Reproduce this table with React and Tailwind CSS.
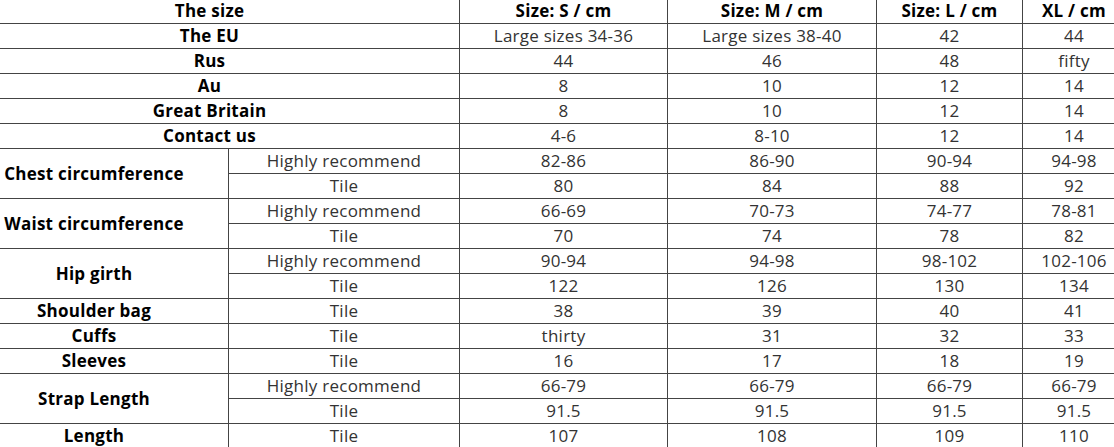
import React from "react";

const B = "border border-[#444]";
const H = `${B} text-center font-bold text-black p-0`;
const L = `${B} text-center font-bold text-black p-0 pr-[40px]`;
const C = `${B} text-center text-[#333] p-0`;

function Vals({ v }) {
  return v.map((x, i) => (
    <td key={i} className={C}>
      {x}
    </td>
  ));
}

export default function App() {
  const rowCls = "h-[25px]";
  return (
    <div
      className="w-[1114px] h-[447px] overflow-hidden bg-white"
      style={{ fontFamily: '"Open Sans", "Noto Sans", sans-serif' }}
    >
      <table className="border-collapse table-fixed w-[1126px] -mt-[2px] -ml-px text-[17px] leading-[22px] tracking-[0.25px]">
        <colgroup>
          <col className="w-[229px]" />
          <col className="w-[231px]" />
          <col className="w-[208px]" />
          <col className="w-[209px]" />
          <col className="w-[146px]" />
          <col className="w-[103px]" />
        </colgroup>
        <tbody>
          <tr className={rowCls}>
            <td colSpan={2} className={L}>The size</td>
            <td className={H}>Size: S / cm</td>
            <td className={H}>Size: M / cm</td>
            <td className={H}>Size: L / cm</td>
            <td className={H}>XL / cm</td>
          </tr>
          <tr className={rowCls}>
            <td colSpan={2} className={L}>The EU</td>
            <Vals v={["Large sizes 34-36", "Large sizes 38-40", "42", "44"]} />
          </tr>
          <tr className={rowCls}>
            <td colSpan={2} className={L}>Rus</td>
            <Vals v={["44", "46", "48", "fifty"]} />
          </tr>
          <tr className={rowCls}>
            <td colSpan={2} className={L}>Au</td>
            <Vals v={["8", "10", "12", "14"]} />
          </tr>
          <tr className={rowCls}>
            <td colSpan={2} className={L}>Great Britain</td>
            <Vals v={["8", "10", "12", "14"]} />
          </tr>
          <tr className={rowCls}>
            <td colSpan={2} className={L}>Contact us</td>
            <Vals v={["4-6", "8-10", "12", "14"]} />
          </tr>
          <tr className={rowCls}>
            <td rowSpan={2} className={L}>Chest circumference</td>
            <Vals v={["Highly recommend", "82-86", "86-90", "90-94", "94-98"]} />
          </tr>
          <tr className={rowCls}>
            <Vals v={["Tile", "80", "84", "88", "92"]} />
          </tr>
          <tr className={rowCls}>
            <td rowSpan={2} className={L}>Waist circumference</td>
            <Vals v={["Highly recommend", "66-69", "70-73", "74-77", "78-81"]} />
          </tr>
          <tr className={rowCls}>
            <Vals v={["Tile", "70", "74", "78", "82"]} />
          </tr>
          <tr className={rowCls}>
            <td rowSpan={2} className={L}>Hip girth</td>
            <Vals v={["Highly recommend", "90-94", "94-98", "98-102", "102-106"]} />
          </tr>
          <tr className={rowCls}>
            <Vals v={["Tile", "122", "126", "130", "134"]} />
          </tr>
          <tr className={rowCls}>
            <td className={L}>Shoulder bag</td>
            <Vals v={["Tile", "38", "39", "40", "41"]} />
          </tr>
          <tr className={rowCls}>
            <td className={L}>Cuffs</td>
            <Vals v={["Tile", "thirty", "31", "32", "33"]} />
          </tr>
          <tr className={rowCls}>
            <td className={L}>Sleeves</td>
            <Vals v={["Tile", "16", "17", "18", "19"]} />
          </tr>
          <tr className={rowCls}>
            <td rowSpan={2} className={L}>Strap Length</td>
            <Vals v={["Highly recommend", "66-79", "66-79", "66-79", "66-79"]} />
          </tr>
          <tr className={rowCls}>
            <Vals v={["Tile", "91.5", "91.5", "91.5", "91.5"]} />
          </tr>
          <tr className={rowCls}>
            <td className={L}>Length</td>
            <Vals v={["Tile", "107", "108", "109", "110"]} />
          </tr>
        </tbody>
      </table>
    </div>
  );
}
